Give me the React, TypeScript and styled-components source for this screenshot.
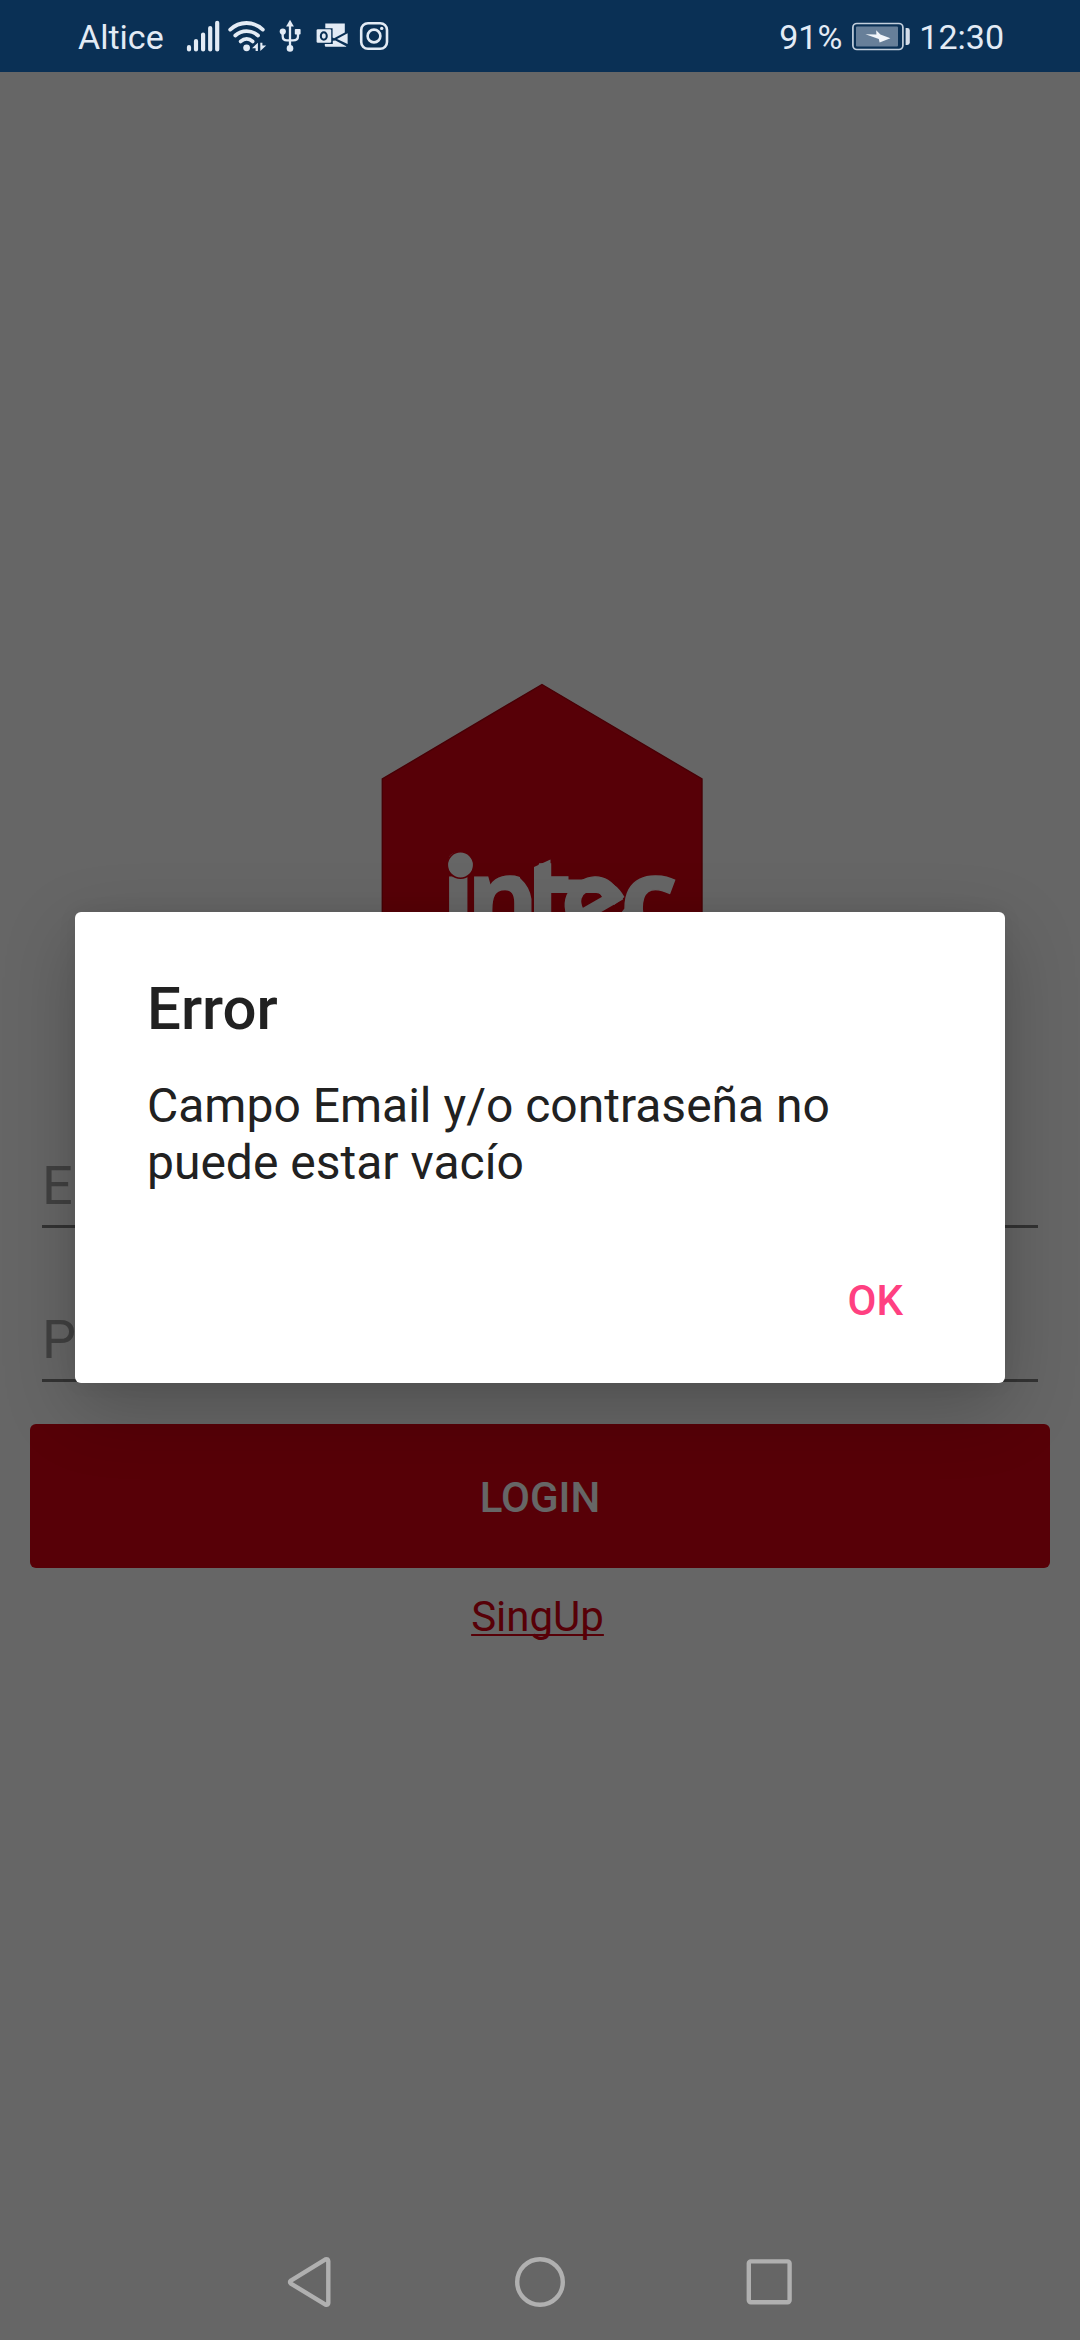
import React from "react";
import styled, { createGlobalStyle } from "styled-components";

const GlobalStyle = createGlobalStyle`
  * { box-sizing: border-box; }
  html, body, #root { margin: 0; padding: 0; }
  body { font-family: Roboto, "Liberation Sans", sans-serif; background: #ffffff; }
`;

const RED = "#da0012";
const STATUS_INK = "#e3ebf5";

const Screen = styled.div`
  position: relative;
  display: flex;
  flex-direction: column;
  width: 1080px;
  height: 2340px;
  overflow: hidden;
  background: #ffffff;
`;

const StatusBar = styled.header`
  position: relative;
  z-index: 2;
  display: flex;
  justify-content: space-between;
  flex: none;
  height: 72px;
  padding: 0 76px 0 78px;
  background: #0a3055;
  color: ${STATUS_INK};
`;

const StatusGroup = styled.div`
  display: flex;
  align-items: flex-start;
`;

const StatusText = styled.span<{ $lead?: number }>`
  margin-left: ${(p) => p.$lead ?? 0}px;
  padding-top: 1px;
  font-size: 34px;
  line-height: 72px;
  white-space: nowrap;
`;

const StatusIcon = styled.svg<{ $lead: number }>`
  display: block;
  flex: none;
  height: 72px;
  margin-left: ${(p) => p.$lead}px;
`;

const LoginForm = styled.main`
  display: flex;
  flex-direction: column;
  align-items: center;
  flex: 1;
  padding: 611px 30px 0;
`;

const Logo = styled.svg`
  display: block;
  flex: none;
  width: 322px;
  height: 372px;
  margin-left: 4px;
`;

const Fields = styled.div`
  display: flex;
  flex-direction: column;
  gap: 64px;
  margin-top: 83px;
`;

const Field = styled.input`
  display: block;
  width: 996px;
  height: 90px;
  padding: 7px 0 0;
  border: 0;
  border-bottom: 3px solid #808080;
  background: transparent;
  font: 400 54px/64px Roboto, "Liberation Sans", sans-serif;
  &::placeholder { color: #a4a4a4; opacity: 1; }
`;

const LoginButton = styled.button`
  width: 1020px;
  height: 144px;
  margin-top: 42px;
  padding: 3px 0 0;
  border: 0;
  border-radius: 6px;
  background: ${RED};
  color: #ffffff;
  font: 500 42px/50px Roboto, "Liberation Sans", sans-serif;
`;

const SignUpLink = styled.a`
  margin: 24px 5px 0 0;
  color: ${RED};
  font-size: 42px;
  line-height: 50px;
  text-decoration: underline;
  text-decoration-thickness: 2px;
  text-decoration-skip-ink: none;
  text-underline-offset: 3px;
`;

const Scrim = styled.div`
  position: absolute;
  inset: 72px 0 0;
  z-index: 1;
  display: flex;
  flex-direction: column;
  align-items: center;
  padding-top: 840px;
  background: rgba(0, 0, 0, 0.6);
`;

const Dialog = styled.section`
  display: flex;
  flex-direction: column;
  width: 930px;
  height: 471px;
  padding: 62px 72px 0;
  border-radius: 6px;
  background: #ffffff;
  color: #212121;
  box-shadow: 0 24px 72px rgba(0, 0, 0, 0.22), 0 0 20px rgba(0, 0, 0, 0.06);
`;

const DialogTitle = styled.h1`
  margin: 0;
  font-size: 60px;
  font-weight: 500;
  line-height: 70px;
`;

const DialogMessage = styled.p`
  margin: 33px 0 0;
  font-size: 48px;
  line-height: 57px;
`;

const DialogActions = styled.div`
  display: flex;
  justify-content: flex-end;
  margin-top: 85px;
  padding-right: 30px;
`;

const DialogButton = styled.button`
  padding: 0;
  border: 0;
  background: none;
  color: #ff4081;
  font: 500 42px/50px Roboto, "Liberation Sans", sans-serif;
`;

const NavBar = styled.nav`
  position: relative;
  z-index: 2;
  display: flex;
  justify-content: center;
  align-items: center;
  gap: 169px;
  flex: none;
  height: 116px;
`;

const NavIcon = styled.svg`
  display: block;
  width: 60px;
  height: 60px;
  fill: none;
  stroke: #b0b0b0;
  stroke-width: 4.4;
  stroke-linejoin: round;
`;

const SignalIcon = () => (
  <StatusIcon $lead={22} width={34} viewBox="185 0 34 72" stroke={STATUS_INK} strokeWidth={4.2} strokeLinecap="round">
    <path d="M188 47.2V49.4M195 41V49.4M202.1 34.5V49.4M209.2 28V49.4M216.2 22.8V49.4" />
  </StatusIcon>
);

const WifiIcon = () => (
  <StatusIcon $lead={7} width={40} viewBox="226 0 40 72" fill="none" stroke={STATUS_INK} strokeWidth={3.8} strokeLinecap="round">
    <path d="M229.2 29.6C238.5 20.8 252.5 20.8 261.8 29.6M234.3 35.5C240.8 29.6 250.4 29.6 257 35.5M239.7 41.4C243.4 38.2 248 38.2 251.6 41.4" />
    <g fill={STATUS_INK} stroke="none">
      <circle cx="245.6" cy="47.8" r="3.4" />
      <path d="M251 48.2L256.9 42.8V51H254.6V48.2ZM259.3 51V42.8H261.4V45.6H265.2Z" />
    </g>
  </StatusIcon>
);

const UsbIcon = () => (
  <StatusIcon $lead={11} width={24} viewBox="277 0 24 72" fill="none" stroke={STATUS_INK} strokeWidth={2.3}>
    <path d="M289 24V47M281.7 32V36.2Q281.7 40.4 286 40.4H292Q297 40.4 297 36.2V32" />
    <g fill={STATUS_INK} stroke="none">
      <path d="M289 19.8L292.9 26.4H285.1Z" />
      <circle cx="289" cy="48.4" r="3.3" />
      <circle cx="281.8" cy="31.6" r="3.1" />
      <rect x="293.8" y="29" width="5.8" height="5.6" rx="0.8" />
    </g>
  </StatusIcon>
);

const OutlookIcon = () => (
  <StatusIcon $lead={14} width={32} viewBox="315 0 32 72" fill={STATUS_INK}>
    <path d="M324.3 23.6H343.8V32.4L333 38.3L331.6 37.4V28.2H324.3Z" />
    <path d="M346.6 33.2V44L336 39Z" />
    <path d="M323.8 44H331.8V40.8L334.4 40.4L345.2 46.2V46.8H325Q323.8 46.8 323.8 45.6Z" />
    <rect x="315.6" y="29.3" width="14.6" height="13.4" rx="1.2" />
    <ellipse cx="322.8" cy="36" rx="3" ry="3.7" fill="none" stroke="#0a3055" strokeWidth="2" />
  </StatusIcon>
);

const InstagramIcon = () => (
  <StatusIcon $lead={11} width={30} viewBox="358 0 30 72" fill="none" stroke={STATUS_INK} strokeWidth={2.6}>
    <rect x="360.2" y="23.2" width="25.8" height="25.6" rx="6.8" />
    <circle cx="373" cy="36" r="6.4" />
    <circle cx="380.7" cy="28.4" r="1.7" fill={STATUS_INK} stroke="none" />
  </StatusIcon>
);

const BatteryIcon = () => (
  <StatusIcon $lead={9} width={60} viewBox="851 0 60 72">
    <rect x="852.9" y="23.5" width="50" height="26" rx="4" fill="none" stroke="#c3cfdd" strokeWidth="1.7" />
    <rect x="856" y="26.4" width="42" height="20.2" rx="1" fill="#677f99" />
    <path d="M876.2 30.2L880.4 34.4L890.4 38.3L879.6 42.6L878.8 38.9L865.4 34.2L876.4 34.6Z" fill="#f2f6fb" />
    <path d="M905.6 28H907.4Q909.8 28 909.8 30.4V42.6Q909.8 45 907.4 45H905.6Z" fill="#d5deea" />
  </StatusIcon>
);

const IntecLogo = () => (
  <Logo viewBox="381 682 322 372">
    <path
      d="M542 683.5L702 778V958L542 1052.5L382.3 958V778Z"
      fill={RED}
      stroke="#b0000e"
      strokeWidth="1.4"
    />
    <text
      x="441 466 523 582 620"
      y="938 938 938 952 938"
      rotate="0 0 0 -30 0"
      fontFamily='"Open Sans", sans-serif'
      fontWeight="700"
      fontSize="113"
      fill="#ffffff"
      stroke="#ffffff"
      strokeWidth="1.4"
    >
      intec
    </text>
    <path d="M520 868H534V914H531.5V898Q530 886 520 877Z" fill={RED} />
    <g fill="#ffffff">
      <circle cx="460.5" cy="864" r="13.2" stroke={RED} strokeWidth="1.6" />
      <path d="M534 866L550.5 858.5V914H534Z" />
      <path d="M550 878.5H598Q615 879 624.5 896L614 904Q606 892 596 892H550Z" />
    </g>
  </Logo>
);

export default function App() {
  return (
    <>
      <GlobalStyle />
      <Screen>
        <StatusBar>
          <StatusGroup>
            <StatusText>Altice</StatusText>
            <SignalIcon />
            <WifiIcon />
            <UsbIcon />
            <OutlookIcon />
            <InstagramIcon />
          </StatusGroup>
          <StatusGroup>
            <StatusText>91%</StatusText>
            <BatteryIcon />
            <StatusText $lead={8}>12:30</StatusText>
          </StatusGroup>
        </StatusBar>

        <LoginForm>
          <IntecLogo />
          <Fields>
            <Field placeholder="Email" />
            <Field placeholder="Password" type="password" />
          </Fields>
          <LoginButton>LOGIN</LoginButton>
          <SignUpLink>SingUp</SignUpLink>
        </LoginForm>

        <Scrim>
          <Dialog role="alertdialog">
            <DialogTitle>Error</DialogTitle>
            <DialogMessage>Campo Email y/o contraseña no puede estar vacío</DialogMessage>
            <DialogActions>
              <DialogButton>OK</DialogButton>
            </DialogActions>
          </Dialog>
        </Scrim>

        <NavBar>
          <NavIcon viewBox="280.5 2252 60 60">
            <path d="M290.4 2280.6L325 2259.4Q327.6 2258.4 327.8 2261.2V2303Q327.6 2305.6 325 2304.6L290.4 2283.6Q288.6 2282 290.4 2280.6Z" />
          </NavIcon>
          <NavIcon viewBox="510 2252 60 60">
            <ellipse cx="540" cy="2282" rx="22.8" ry="22.8" />
          </NavIcon>
          <NavIcon viewBox="739 2252 60 60">
            <rect x="748.8" y="2261.4" width="40.8" height="40.8" rx="2" />
          </NavIcon>
        </NavBar>
      </Screen>
    </>
  );
}
